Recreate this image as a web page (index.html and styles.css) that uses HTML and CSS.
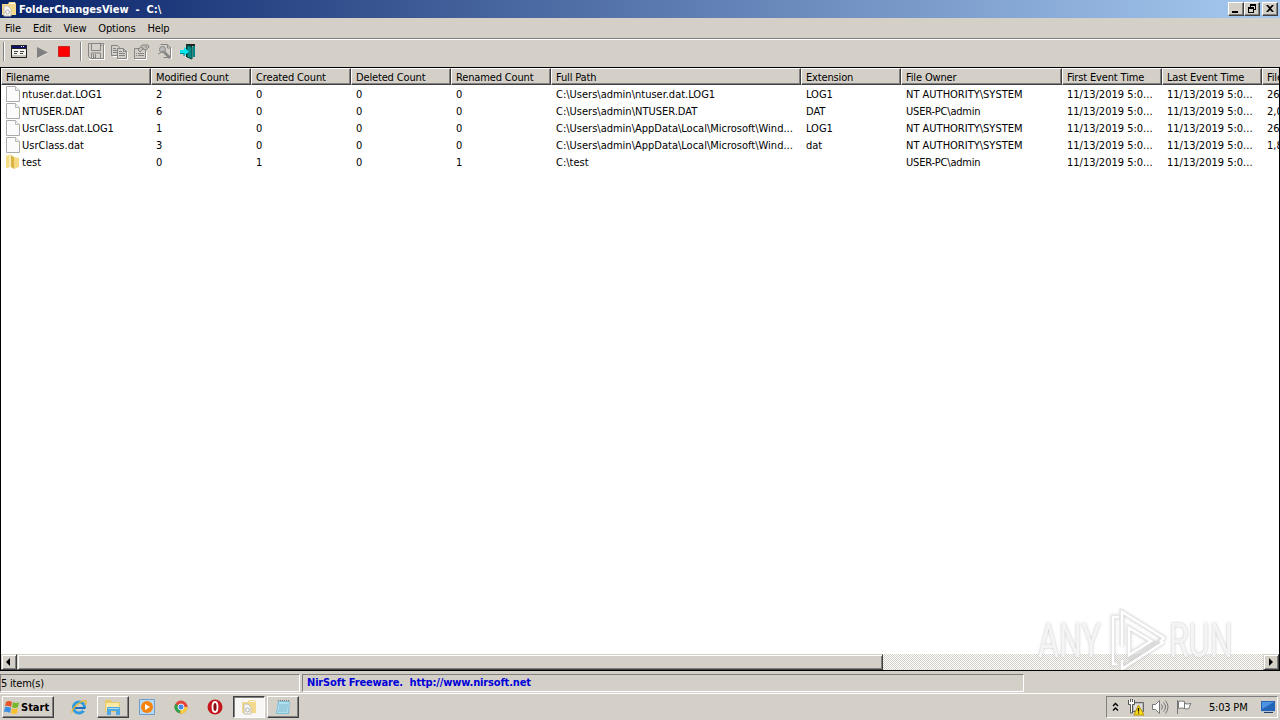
FILE: index.html
```html
<!DOCTYPE html>
<html lang="en">
<head>
    <meta charset="UTF-8">
    <title>FolderChangesView</title>
    <link rel="stylesheet" href="styles.css">
</head>
<body>
    <svg class="defs">
        <symbol id="file" viewBox="0 0 14 16">
            <path d="M.5.5h9l4 4v11H.5z" fill="#fbfbfb" stroke="#aaa"/>
            <path d="M9.500.5v4h4" fill="#eee" stroke="#bbb"/>
        </symbol>
        <symbol id="appicon" viewBox="0 0 16 16">
            <path d="M1 3h6l1-2h6l1 2v11H1z" fill="#f3d98e"/>
            <path d="M9 2h5v1H9z" fill="#fff"/>
            <path d="M3 5h4l3 3v7H3z" fill="#f5f5f5" stroke="#c9c2ac"/>
            <circle cx="6.500" cy="11" r="2" fill="none" stroke="#b5b5b5"/>
        </symbol>
    </svg>

    <div class="titlebar">
        <svg class="app" width="16" height="16"><use href="#appicon"/></svg>
        <span class="title">FolderChangesView&nbsp; -&nbsp; C:\</span>
        <div class="controls">
            <button><svg width="14" height="12"><path d="M3 8h6v2H3z"/></svg></button>
            <button><svg width="14" height="12"><path d="M5 1h6v6H9V6h1V3H6v1H5zM3 4h6v6H3zM4 6v3h4V6z" fill-rule="evenodd"/></svg></button>
            <button class="close"><svg width="14" height="12"><path d="M3 2h2l2 2 2-2h2L8 5.500 11 9H9L7 7 5 9H3l3-3.500z"/></svg></button>
        </div>
    </div>

    <div class="menu">
        <span>File</span>
        <span>Edit</span>
        <span>View</span>
        <span>Options</span>
        <span>Help</span>
    </div>

    <div class="toolbar">
        <i class="sep"></i>
        <svg class="t-prop" width="16" height="16" shape-rendering="crispEdges">
            <path d="M0 1h16v13H0z" fill="#222"/><path d="M1 2h14v2H1z" fill="#10106c"/>
            <path d="M10 2h1v1h-1zM12 2h1v1h-1z" fill="#fff"/><path d="M1 5h14v8H1z" fill="#f4f2ee"/>
            <path d="M3 7h4v1H3zM3 9h3v1H3zM9 7h4v1H9zM9 9h3v1H9z" fill="#444"/><path d="M1 11h14v2H1z" fill="#c8c4bc"/>
        </svg>
        <svg class="t-play" width="16" height="16"><path d="M4 4l10 5-10 5z" fill="#fff"/><path d="M3 3l11 5.500L3 14z" fill="#808080"/></svg>
        <svg class="t-stop" width="16" height="16"><path d="M2.500 2.500h11v10h-11z" fill="#f00" stroke="#c22"/></svg>
        <i class="sep second"></i>
        <svg class="t-save" width="17" height="17" fill="none" stroke="#858585">
            <path d="M1 16.500h15.500V2" stroke="#fff"/>
            <path d="M.5.5h15v15h-13l-2-2zM3.500.5v7h9v-7M3.500 15v-5h9v5M5.500 11v4h2v-4M13 2.500h1"/>
        </svg>
        <svg class="t-copy" width="17" height="16" fill="#d4d0c8" stroke="#858585">
            <path d="M2 12.500h5" stroke="#fff"/>
            <path d="M.5 1.500h6l2 2v8h-8z"/><path d="M2 4.500h3M2 6.500h4M2 8.500h4"/>
            <path d="M6.500 4.500h6l3 3v7h-9z"/><path d="M8 7.500h3M8 9.500h6M8 11.500h6M12.500 5v2.500H15"/>
            <path d="M7 15.500h9.500V8" stroke="#fff" fill="none"/>
        </svg>
        <svg class="t-props" width="17" height="16" fill="#d4d0c8" stroke="#858585">
            <path d="M.5 4.500h11v10H.5z"/><path d="M2 9.500h1M4 9.500h6M2 11.500h1M4 11.500h6"/>
            <path d="M4 6l4-5h6l1 2-3 3-3-1-3 3z" fill="#c4c0b8"/><path d="M7 3.500l3 1M11 3h2"/>
            <path d="M1 15.500h11.500V8" stroke="#fff" fill="none"/>
        </svg>
        <svg class="t-find" width="17" height="16" fill="#d4d0c8" stroke="#858585">
            <path d="M3.500.5h7l3 3v10h-7"/><path d="M10.500 1v3h3"/>
            <circle cx="5.500" cy="5.500" r="3" fill="#bbb"/><path d="M7 8l6 6" stroke-width="2.500"/>
            <path d="M1 10l6-3"/><path d="M14.500 4v11" stroke="#fff"/>
        </svg>
        <svg class="t-exit" width="16" height="16">
            <path d="M6 0h9v13H6z" fill="#222"/><path d="M12 2h2v11h-2z" fill="#9bb"/>
            <path d="M7 1l5 2v12l-5-2z" fill="#008b8b" stroke="#043"/><path d="M14 2v11" stroke="#088" stroke-width="2"/>
            <path d="M0 6h4V3l5 4.500L4 12V9H0z" fill="#00e5ee"/><path d="M0 9.500h4V12" fill="none" stroke="#088"/>
        </svg>
    </div>

    <div class="list">
        <div class="head">
            <div>Filename</div><div>Modified Count</div><div>Created Count</div><div>Deleted Count</div><div>Renamed Count</div><div>Full Path</div><div>Extension</div><div>File Owner</div><div>First Event Time</div><div>Last Event Time</div><div>File</div>
        </div>
        <div class="row">
            <div><svg><use href="#file"/></svg>ntuser.dat.LOG1</div><div>2</div><div>0</div><div>0</div><div>0</div><div>C:\Users\admin\ntuser.dat.LOG1</div><div>LOG1</div><div>NT AUTHORITY\SYSTEM</div><div>11/13/2019 5:0...</div><div>11/13/2019 5:0...</div><div>26</div>
        </div>
        <div class="row">
            <div><svg><use href="#file"/></svg>NTUSER.DAT</div><div>6</div><div>0</div><div>0</div><div>0</div><div>C:\Users\admin\NTUSER.DAT</div><div>DAT</div><div class="pc">USER-PC\admin</div><div>11/13/2019 5:0...</div><div>11/13/2019 5:0...</div><div>2,0</div>
        </div>
        <div class="row">
            <div><svg><use href="#file"/></svg>UsrClass.dat.LOG1</div><div>1</div><div>0</div><div>0</div><div>0</div><div>C:\Users\admin\AppData\Local\Microsoft\Wind...</div><div>LOG1</div><div>NT AUTHORITY\SYSTEM</div><div>11/13/2019 5:0...</div><div>11/13/2019 5:0...</div><div>26</div>
        </div>
        <div class="row">
            <div><svg><use href="#file"/></svg>UsrClass.dat</div><div>3</div><div>0</div><div>0</div><div>0</div><div>C:\Users\admin\AppData\Local\Microsoft\Wind...</div><div>dat</div><div>NT AUTHORITY\SYSTEM</div><div>11/13/2019 5:0...</div><div>11/13/2019 5:0...</div><div>1,8</div>
        </div>
        <div class="row">
            <div><svg viewBox="0 0 14 16"><path d="M0 2l5-2v13l-5 1z" fill="#f5dc82"/><path d="M5 1l3 2v12l-3-2z" fill="#d9b345"/><path d="M8 3l5 1v9l-5 2z" fill="#f3da80"/><path d="M3 1l2-1v13H3z" fill="#fbeeb5"/></svg>test</div><div>0</div><div>1</div><div>0</div><div>1</div><div>C:\test</div><div></div><div class="pc">USER-PC\admin</div><div>11/13/2019 5:0...</div><div>11/13/2019 5:0...</div><div></div>
        </div>
        <div class="scrollbar">
            <div class="arrow"><svg width="12" height="12"><path d="M7 2v8L3 6z"/></svg></div>
            <div class="thumb"></div>
            <div class="track"></div>
            <div class="arrow"><svg width="12" height="12"><path d="M4 2v8l4-4z"/></svg></div>
        </div>
        <div class="watermark">
            <span>ANY</span>
            <svg width="60" height="66" viewBox="0 0 60 66" fill="none">
                <path class="glow" d="M12 9H6v47h4M15 38V4l42 26-4 4M22 20v27l22-14zM15 52v9l42-27M57 30l-35 24"/>
                <path d="M12 9H6v47h4M15 38V4l42 26-4 4M22 20v27l22-14zM15 52v9l42-27" stroke="#fff" stroke-width="2.500"/>
            </svg>
            <span>RUN</span>
        </div>
    </div>

    <div class="statusbar">
        <div class="count">5 item(s)</div>
        <div class="link">NirSoft Freeware.&nbsp; http://www.nirsoft.net</div>
    </div>

    <div class="taskbar">
        <div class="start">
            <svg width="16" height="16"><path d="M2 3q3-2 6 0L7 8Q4 6 1 7z" fill="#e8542a"/><path d="M9 3q3 2 6 0l-1 5q-3 2-6 0z" fill="#76b82a"/><path d="M1 8q3-1 6 1l-1 5q-3-2-6-1z" fill="#3c8fe0"/><path d="M8 9q3 2 6 0l-1 5q-3 2-6 0z" fill="#fbc02d"/></svg>
            Start
        </div>
        <div class="task ie">
            <svg width="16" height="16" fill="none"><circle cx="8" cy="8.500" r="5.500" stroke="#2f9be0" stroke-width="3"/><path d="M4 9h10" stroke="#1c6fbf" stroke-width="2"/><path d="M12 10h4v2h-4z" fill="#d4d0c8"/><path d="M1 14C0 10 11 0 15 2q1 1-1 4" stroke="#eab72c" stroke-width="1.300"/></svg>
        </div>
        <div class="task raised">
            <svg width="18" height="16"><path d="M1 2l1-1h5l1 2h7l1 1v9H1z" fill="#e8c967"/><path d="M2 4h13v8H2z" fill="#fbeaa5"/><path d="M3 16V9q0-1 1-1h11q1 0 1 1v7h-4v-4H7v4z" fill="#4fa8e0"/><path d="M4 9h11v1H4z" fill="#a5dcf7"/></svg>
        </div>
        <div class="task">
            <svg width="16" height="16"><path d="M.5.5h15v15H.5z" fill="#b9daf4" stroke="#6a9fd0"/><circle cx="8" cy="8" r="6" fill="#f58310"/><path d="M6 5l5 3-5 3z" fill="#fff"/></svg>
        </div>
        <div class="task">
            <svg width="16" height="16"><circle cx="8" cy="8" r="6.500" fill="#e2463a"/><path d="M8 8L2.300 4.900A6.500 6.500 0 0 0 7 14.400z" fill="#2da34e"/><path d="M8 8h6.500A6.500 6.500 0 0 1 7 14.400z" fill="#f8cc3c"/><circle cx="8" cy="8" r="3" fill="#4788ed" stroke="#eee"/></svg>
        </div>
        <div class="task">
            <svg width="16" height="16"><circle cx="8" cy="8" r="7.500" fill="#c4161c"/><ellipse cx="8" cy="8" rx="2.500" ry="5" fill="#8d0c10" stroke="#fff" stroke-width="1.800"/></svg>
        </div>
        <div class="task pressed">
            <svg width="16" height="16"><use href="#appicon"/></svg>
        </div>
        <div class="task raised note">
            <svg width="16" height="16"><path d="M3 2h12l-1 13H1z" fill="#7fbdd5"/><path d="M4 3h10l-1 11H2z" fill="#b0e0ee"/><path d="M4 6h9M4 8h9M4 10h8M3 12h9" stroke="#83bcd0"/><path d="M3 1.500h12" stroke="#777" stroke-dasharray="1 1"/></svg>
        </div>
        <div class="tray">
            <svg class="chev" width="7" height="10" fill="none" stroke="#000" stroke-width="1.400"><path d="M1 4l2.500-2.500L6 4M1 8.500L3.500 6 6 8.500"/></svg>
            <svg class="net" width="17" height="17"><path d="M4.500 3.500h11v9h-11z" fill="#bbb" stroke="#666"/><path d="M6 5h8v6H6z" fill="#ddd"/><path d="M.5 1v4.500h2V14h2V5.500h2V1M2.500 0v3M4.500 0v3" fill="#fff" stroke="#555"/><path d="M10.500 6l5.500 10H6z" fill="#ffdf1c" stroke="#b59400"/><path d="M10.500 9v3.500M10.500 13.500v1" stroke="#000" stroke-width="1.300"/></svg>
            <svg class="vol" width="17" height="16" fill="none" stroke="#777"><path d="M.5 5.500h3l4-4v13l-4-4h-3z" fill="#fff"/><path d="M9.500 5.500q2 2.500 0 5M11.500 3.500q4 4.500 0 9M13.500 1.500q5 6.500 0 13"/></svg>
            <svg class="flag" width="17" height="16" fill="#fff" stroke="#777"><path d="M1.500 1v14M2.500 2.500q3-1 6 0v7q-3-1-6 0zM8.500 4.500q3 1 6.500 0-2 3-2 5-2 1-4.500 0z"/></svg>
            <span>5:03 PM</span>
            <svg class="desk" width="16" height="14"><path d="M1 1h14v10H1z" fill="#2464b8"/><path d="M2 2h12L2 9z" fill="#4d93e2"/><path d="M1 11h14v1H1z" fill="#b8c4d4"/><path d="M4 12h9v1H4z" fill="#233f66"/></svg>
        </div>
    </div>
</body>
</html>
```
FILE: styles.css
```css
* {
    box-sizing: border-box;
}
body {
    margin: 0;
    width: 1280px;
    height: 720px;
    display: flex;
    flex-direction: column;
    overflow: hidden;
    background: #d4d0c8;
    color: #000;
    font: 11px/13px "DejaVu Sans Condensed", "DejaVu Sans", sans-serif;
    font-stretch: condensed;
    letter-spacing: -0.2px;
    white-space: nowrap;
}
svg {
    display: block;
    flex: none;
}
.defs {
    position: absolute;
    width: 0;
    height: 0;
}
.titlebar {
    height: 18px;
    flex: none;
    display: flex;
    align-items: center;
    padding: 0 2px 0 1px;
    background: linear-gradient(90deg, #0a246a, #a6caf0);
    color: #fff;
    font-weight: bold;
}
.title {
    margin-left: 2px;
    letter-spacing: 0;
}
.controls {
    display: flex;
    margin-left: auto;
}
.controls button {
    width: 16px;
    height: 14px;
    padding: 0;
    border: 1px solid;
    border-color: #fff #404040 #404040 #fff;
    box-shadow: inset -1px -1px #808080;
    background: #d4d0c8;
}
.controls .close {
    margin-left: 2px;
}
.menu {
    height: 21px;
    flex: none;
    display: flex;
    gap: 12px;
    padding: 4px 5px;
    border-bottom: 1px solid #808080;
    letter-spacing: -0.15px;
}
.toolbar {
    height: 28px;
    flex: none;
    display: flex;
    align-items: center;
    padding: 0 0 4px 3px;
    border-top: 1px solid #fff;
}
.sep {
    width: 2px;
    height: 19px;
    border-left: 1px solid #808080;
    border-right: 1px solid #fff;
}
.second {
    margin: 0 6px 0 8px;
}
.t-prop {
    margin-left: 6px;
}
.t-play {
    margin-left: 7px;
}
.t-stop {
    margin-left: 6px;
}
.t-copy, .t-props, .t-find, .t-exit {
    margin-left: 6px;
}
.list {
    position: relative;
    height: 604px;
    flex: none;
    display: flex;
    flex-direction: column;
    border: 1px solid #000;
    background: #fff;
    overflow: hidden;
}
.head, .row {
    display: grid;
    grid-template-columns: 150px 100px 100px 100px 100px 250px 100px 161px 100px 100px 18px;
    flex: none;
}
.head {
    height: 17px;
    margin-bottom: 1px;
}
.head div {
    padding: 2px 0 0 4px;
    overflow: hidden;
    background: #d4d0c8;
    border: 1px solid;
    border-color: #fff #404040 #404040 #fff;
    box-shadow: inset -1px -1px #808080;
    letter-spacing: -0.15px;
}
.head div:last-child {
    border-right: 0;
    box-shadow: inset 0 -1px #808080;
}
.row {
    height: 17px;
    letter-spacing: 0;
}
.row div {
    display: flex;
    padding: 2px 0 0 5px;
    overflow: hidden;
}
.row .pc {
    letter-spacing: -0.2px;
}
.row svg {
    width: 14px;
    height: 16px;
    margin: -2px 2px 0 0;
}
.scrollbar {
    display: flex;
    height: 16px;
    margin-top: auto;
}
.arrow, .thumb {
    background: #d4d0c8;
    border: 1px solid;
    border-color: #d4d0c8 #404040 #404040 #d4d0c8;
    box-shadow: inset 1px 1px #fff, inset -1px -1px #808080;
}
.arrow {
    width: 16px;
    padding: 1px;
}
.thumb {
    width: 866px;
}
.track {
    flex: 1;
    background: repeating-conic-gradient(#d4d0c8 0 25%, #fff 0 50%) 0 0 / 2px 2px;
}
.watermark {
    position: absolute;
    left: 1037px;
    top: 540px;
    display: flex;
    align-items: center;
    color: rgba(255, 255, 255, 0.8);
    font: 48px/62px "Roboto", sans-serif;
    letter-spacing: 0;
    text-shadow: 0 0 3px #bbb;
}
.watermark span {
    width: 66px;
    transform: scaleX(0.67);
    transform-origin: left;
}
.watermark svg {
    margin: 0 2px 0 3px;
}
.watermark .glow {
    stroke: #ccc;
    stroke-width: 5px;
    opacity: 0.7;
    filter: blur(1px);
}
.statusbar {
    height: 22px;
    flex: none;
    display: flex;
    gap: 2px;
    padding: 3px 0 1px;
}
.statusbar div {
    border: 1px solid;
    border-color: #808080 #fff #fff #808080;
    padding-top: 2px;
}
.count {
    width: 300px;
}
.statusbar .link {
    width: 722px;
    padding: 1px 0 0 4px;
    color: #0000d8;
    font-weight: bold;
    letter-spacing: -0.15px;
}
.taskbar {
    flex: 1;
    display: flex;
    align-items: flex-start;
    padding: 2px 2px 0;
    border-top: 1px solid #fff;
}
.start, .raised {
    border: 1px solid;
    border-color: #fff #404040 #404040 #fff;
    box-shadow: inset -1px -1px #808080;
}
.start {
    width: 52px;
    height: 22px;
    display: flex;
    align-items: center;
    gap: 1px;
    padding-left: 1px;
    font-weight: bold;
    letter-spacing: 0;
    margin-right: 9px;
}
.task {
    width: 32px;
    height: 22px;
    margin-right: 2px;
    display: flex;
    align-items: center;
    justify-content: center;
}
.ie {
    margin-right: 2px;
}
.pressed {
    border: 1px solid;
    border-color: #404040 #fff #fff #404040;
    box-shadow: inset 1px 1px #808080;
    background: #f8f7f5;
}
.tray {
    width: 172px;
    height: 22px;
    margin-left: auto;
    display: flex;
    align-items: center;
    padding-left: 5px;
    border: 1px solid;
    border-color: #808080 #fff #fff #808080;
}
.net {
    margin-left: 9px;
}
.vol {
    margin-left: 7px;
}
.flag {
    margin-left: 7px;
}
.tray span {
    margin-left: 16px;
    width: 41px;
}
.desk {
    margin-left: 10px;
}
```
